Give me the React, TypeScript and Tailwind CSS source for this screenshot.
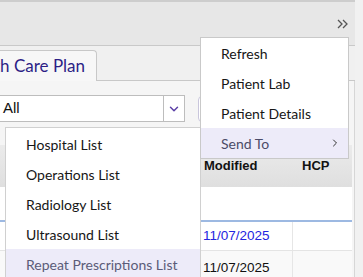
import { ChevronDown, ChevronRight } from "lucide-react";

const listItems = [
	"Hospital List",
	"Operations List",
	"Radiology List",
	"Ultrasound List",
	"Repeat Prescriptions List",
];

const actionItems = ["Refresh", "Patient Lab", "Patient Details", "Send To"];

function DoubleChevron() {
	return (
		<svg width="11" height="10" viewBox="0 0 11 10" fill="none" stroke="#555" strokeWidth="1.3">
			<path d="M1 1l4 4-4 4" />
			<path d="M6 1l4 4-4 4" />
		</svg>
	);
}

export default function App() {
	return (
		<div className="relative flex w-[363px] h-[277px] overflow-hidden bg-[#f1f1f1] font-['Lato',sans-serif]">
			<div className="flex flex-col w-[355px] shrink-0">
				{/* top bar */}
				<div className="h-[46px] shrink-0 flex justify-end items-start border-t-2 border-b border-t-[#cdcdcd] border-b-[#c9c9c9] bg-[#e7e7e7] pt-[17px] pr-[7px]">
					<DoubleChevron />
				</div>

				{/* tabs */}
				<div className="h-[35px] shrink-0 flex items-end bg-[#f0f0f0]">
					<div className="-ml-[53px] w-[150px] shrink-0 h-[31px] flex items-center justify-end pr-[11px] bg-[#f7f7f7] border-t border-r border-[#c8c8c8] rounded-tr-[4px] text-[17px] text-[#2d1f86] whitespace-nowrap">
						Health Care Plan
					</div>
					<div className="flex-1 h-full border-b border-[#c8c8c8]" />
				</div>

				{/* content */}
				<div className="flex-1 bg-[#f5f5f5] pr-[3px] border-r border-[#d6d6d6]">
					<div className="flex items-center mt-[14px]">
						<div className="flex w-[185px] h-[27px] bg-white border-y border-r border-[#bdbdbd]">
							<span className="flex-1 pl-[3px] flex items-center text-[15px] text-[#111] font-['Liberation_Sans',sans-serif]">
								All
							</span>
							<span className="w-[21px] flex items-center justify-center border-l border-[#bdbdbd]">
								<ChevronDown className="w-[14px] h-[14px] text-[#5b3fa6]" strokeWidth={2.5} />
							</span>
						</div>
						<div className="ml-[13px] w-[90px] h-[26px] rounded-[4px] border border-[#c9c6dc] bg-white" />
					</div>

					<div className="mt-[23px] w-[352px] font-['Liberation_Sans',sans-serif]">
						<div className="flex h-[42px] items-center bg-gradient-to-b from-[#ebebeb] to-[#dfdfdf] text-[13px] font-bold text-[#111]">
							<div className="w-[200px]" />
							<div className="w-[92px] pl-[4px]">Modified</div>
							<div className="pl-[10px]">HCP</div>
						</div>
						<div className="h-[33px] bg-white" />
						<div className="h-[2px] bg-[#9db9e2]" />
						<div className="flex h-[29px] bg-white border-b border-[#e4e4e4] text-[13.5px]">
							<div className="w-[200px]" />
							<div className="w-[92px] pl-[3px] flex items-center text-[#2424e0]">11/07/2025</div>
							<div className="flex-1 border-l border-[#e6e6e6]" />
						</div>
						<div className="flex h-[35px] bg-[#f9f9f9] text-[13.5px] text-[#111]">
							<div className="w-[200px]" />
							<div className="w-[92px] pl-[3px] flex items-center">11/07/2025</div>
							<div className="flex-1 border-l border-[#e6e6e6]" />
						</div>
					</div>
				</div>
			</div>
			<div className="flex-1 bg-[#f1f1f1]" />

			{/* list dropdown menu */}
			<div className="absolute left-[5px] top-[127px] w-[196px] pt-[1px] bg-white border border-[#d0d0d0] text-[14px]">
				{listItems.map((item, idx) => (
					<div
						key={item}
						className={`h-[30px] flex items-center pl-[20px] ${
							idx === listItems.length - 1 ? "bg-[#edebf9] text-[#5b5b78]" : "text-[#161616]"
						}`}>
						{item}
					</div>
				))}
			</div>

			{/* action menu */}
			<div className="absolute left-[200px] top-[37px] w-[149px] bg-white border border-[#c9c9c9] text-[14px]">
				{actionItems.map((item) => (
					<div
						key={item}
						className={`h-[30px] flex items-center justify-between pl-[20px] pr-[7px] ${
							item === "Send To" ? "bg-[#edebf9] text-[#4b4b68]" : "text-[#161616]"
						}`}>
						<span>{item}</span>
						{item === "Send To" && <ChevronRight className="w-[12px] h-[12px] text-[#333]" strokeWidth={2} />}
					</div>
				))}
			</div>
		</div>
	);
}
